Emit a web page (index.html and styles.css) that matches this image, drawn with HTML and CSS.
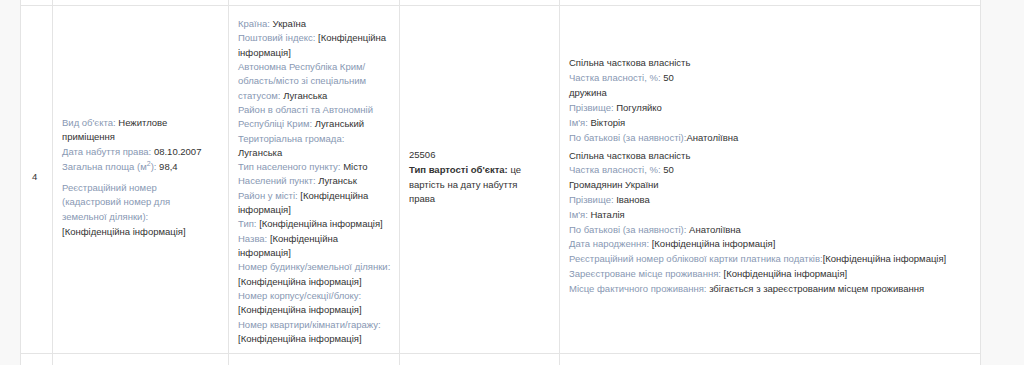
FILE: index.html
```html
<!DOCTYPE html>
<html lang="uk">
<head>
<meta charset="utf-8">
<title>Об'єкти</title>
<link rel="stylesheet" href="styles.css">
</head>
<body>
<div class="page">
  <table class="grid">
    <colgroup>
      <col class="c-num">
      <col class="c-obj">
      <col class="c-addr">
      <col class="c-cost">
      <col class="c-own">
    </colgroup>
    <tr class="prev">
      <td></td><td></td><td></td><td></td><td></td>
    </tr>
    <tr class="main">
      <td class="num">4</td>
      <td class="obj">
        <div class="grp">
          <div><span class="lb">Вид об'єкта:</span> <span class="v">Нежитлове<br>приміщення</span></div>
          <div><span class="lb">Дата набуття права:</span> <span class="v">08.10.2007</span></div>
          <div><span class="lb">Загальна площа (м<sup>2</sup>):</span> <span class="v">98,4</span></div>
        </div>
        <div class="grp">
          <div><span class="lb">Реєстраційний номер<br>(кадастровий номер для<br>земельної ділянки):</span><br><span class="v">[Конфіденційна інформація]</span></div>
        </div>
      </td>
      <td class="addr">
        <div><span class="lb">Країна:</span> <span class="v">Україна</span></div>
        <div><span class="lb">Поштовий індекс:</span> <span class="v">[Конфіденційна<br>інформація]</span></div>
        <div><span class="lb">Автономна Республіка Крим/<br>область/місто зі спеціальним<br>статусом:</span> <span class="v">Луганська</span></div>
        <div><span class="lb">Район в області та Автономній<br>Республіці Крим:</span> <span class="v">Луганський</span></div>
        <div><span class="lb">Територіальна громада:</span><br><span class="v">Луганська</span></div>
        <div><span class="lb">Тип населеного пункту:</span> <span class="v">Місто</span></div>
        <div><span class="lb">Населений пункт:</span> <span class="v">Луганськ</span></div>
        <div><span class="lb">Район у місті:</span> <span class="v">[Конфіденційна<br>інформація]</span></div>
        <div><span class="lb">Тип:</span> <span class="v">[Конфіденційна інформація]</span></div>
        <div><span class="lb">Назва:</span> <span class="v">[Конфіденційна<br>інформація]</span></div>
        <div><span class="lb">Номер будинку/земельної ділянки:</span><br><span class="v">[Конфіденційна інформація]</span></div>
        <div><span class="lb">Номер корпусу/секції/блоку:</span><br><span class="v">[Конфіденційна інформація]</span></div>
        <div><span class="lb">Номер квартири/кімнати/гаражу:</span><br><span class="v">[Конфіденційна інформація]</span></div>
      </td>
      <td class="cost">
        <div class="v">25506</div>
        <div class="v"><b>Тип вартості об'єкта:</b> це<br>вартість на дату набуття<br>права</div>
      </td>
      <td class="own">
        <div class="owner">
          <div class="v">Спільна часткова власність</div>
          <div><span class="lb">Частка власності, %:</span> <span class="v">50</span></div>
          <div class="v">дружина</div>
          <div><span class="lb">Прізвище:</span> <span class="v">Погуляйко</span></div>
          <div><span class="lb">Ім'я:</span> <span class="v">Вікторія</span></div>
          <div><span class="lb">По батькові (за наявності):</span><span class="v">Анатоліївна</span></div>
        </div>
        <div class="owner">
          <div class="v">Спільна часткова власність</div>
          <div><span class="lb">Частка власності, %:</span> <span class="v">50</span></div>
          <div class="v">Громадянин України</div>
          <div><span class="lb">Прізвище:</span> <span class="v">Іванова</span></div>
          <div><span class="lb">Ім'я:</span> <span class="v">Наталія</span></div>
          <div><span class="lb">По батькові (за наявності):</span> <span class="v">Анатоліївна</span></div>
          <div><span class="lb">Дата народження:</span> <span class="v">[Конфіденційна інформація]</span></div>
          <div><span class="lb">Реєстраційний номер облікової картки платника податків:</span><span class="v">[Конфіденційна інформація]</span></div>
          <div><span class="lb">Зареєстроване місце проживання:</span> <span class="v">[Конфіденційна інформація]</span></div>
          <div><span class="lb">Місце фактичного проживання:</span> <span class="v">збігається з зареєстрованим місцем проживання</span></div>
        </div>
      </td>
    </tr>
    <tr class="next">
      <td></td><td></td><td></td><td></td><td></td>
    </tr>
  </table>
</div>
</body>
</html>
```

FILE: styles.css
```css
html, body {
  margin: 0;
  padding: 0;
  background: #f8f8f8;
}
body {
  font-family: "Liberation Sans", Arial, sans-serif;
  font-size: 9.5px;
  color: #333;
}
.page {
  padding-left: 20px;
  height: 365px;
  overflow: hidden;
}
.grid {
  border-collapse: collapse;
  table-layout: fixed;
  width: 961px;
  background: #fff;
}
.grid td {
  border: 1px solid #e4e4e4;
  padding: 7px 9px 11px 9px;
  vertical-align: middle;
  line-height: 14.7px;
  white-space: nowrap;
}
.c-num { width: 32px; }
.c-obj { width: 176px; }
.c-addr { width: 171px; }
.c-cost { width: 160px; }
.c-own { width: 421px; }

.grid tr.prev td {
  border-top: none;
  padding: 0;
  height: 5px;
}
.grid tr.next td {
  padding: 0;
  height: 40px;
}
.grid td.num {
  padding-left: 11px;
}
.lb { color: #8898b3; }
.v { color: #333; }
.obj .grp + .grp { margin-top: 6px; }
.obj sup {
  font-size: 7px;
  line-height: 0;
  vertical-align: 4px;
}
.grid td.addr {
  line-height: 14.32px;
  padding-top: 11px;
  padding-bottom: 7px;
}
.grid td.own {
  line-height: 14.8px;
  padding-top: 5px;
  padding-bottom: 13px;
}
.own .owner:first-child { line-height: 15px; }
.cost b { font-weight: bold; color: #333; }
.owner + .owner { margin-top: 4px; }
```
